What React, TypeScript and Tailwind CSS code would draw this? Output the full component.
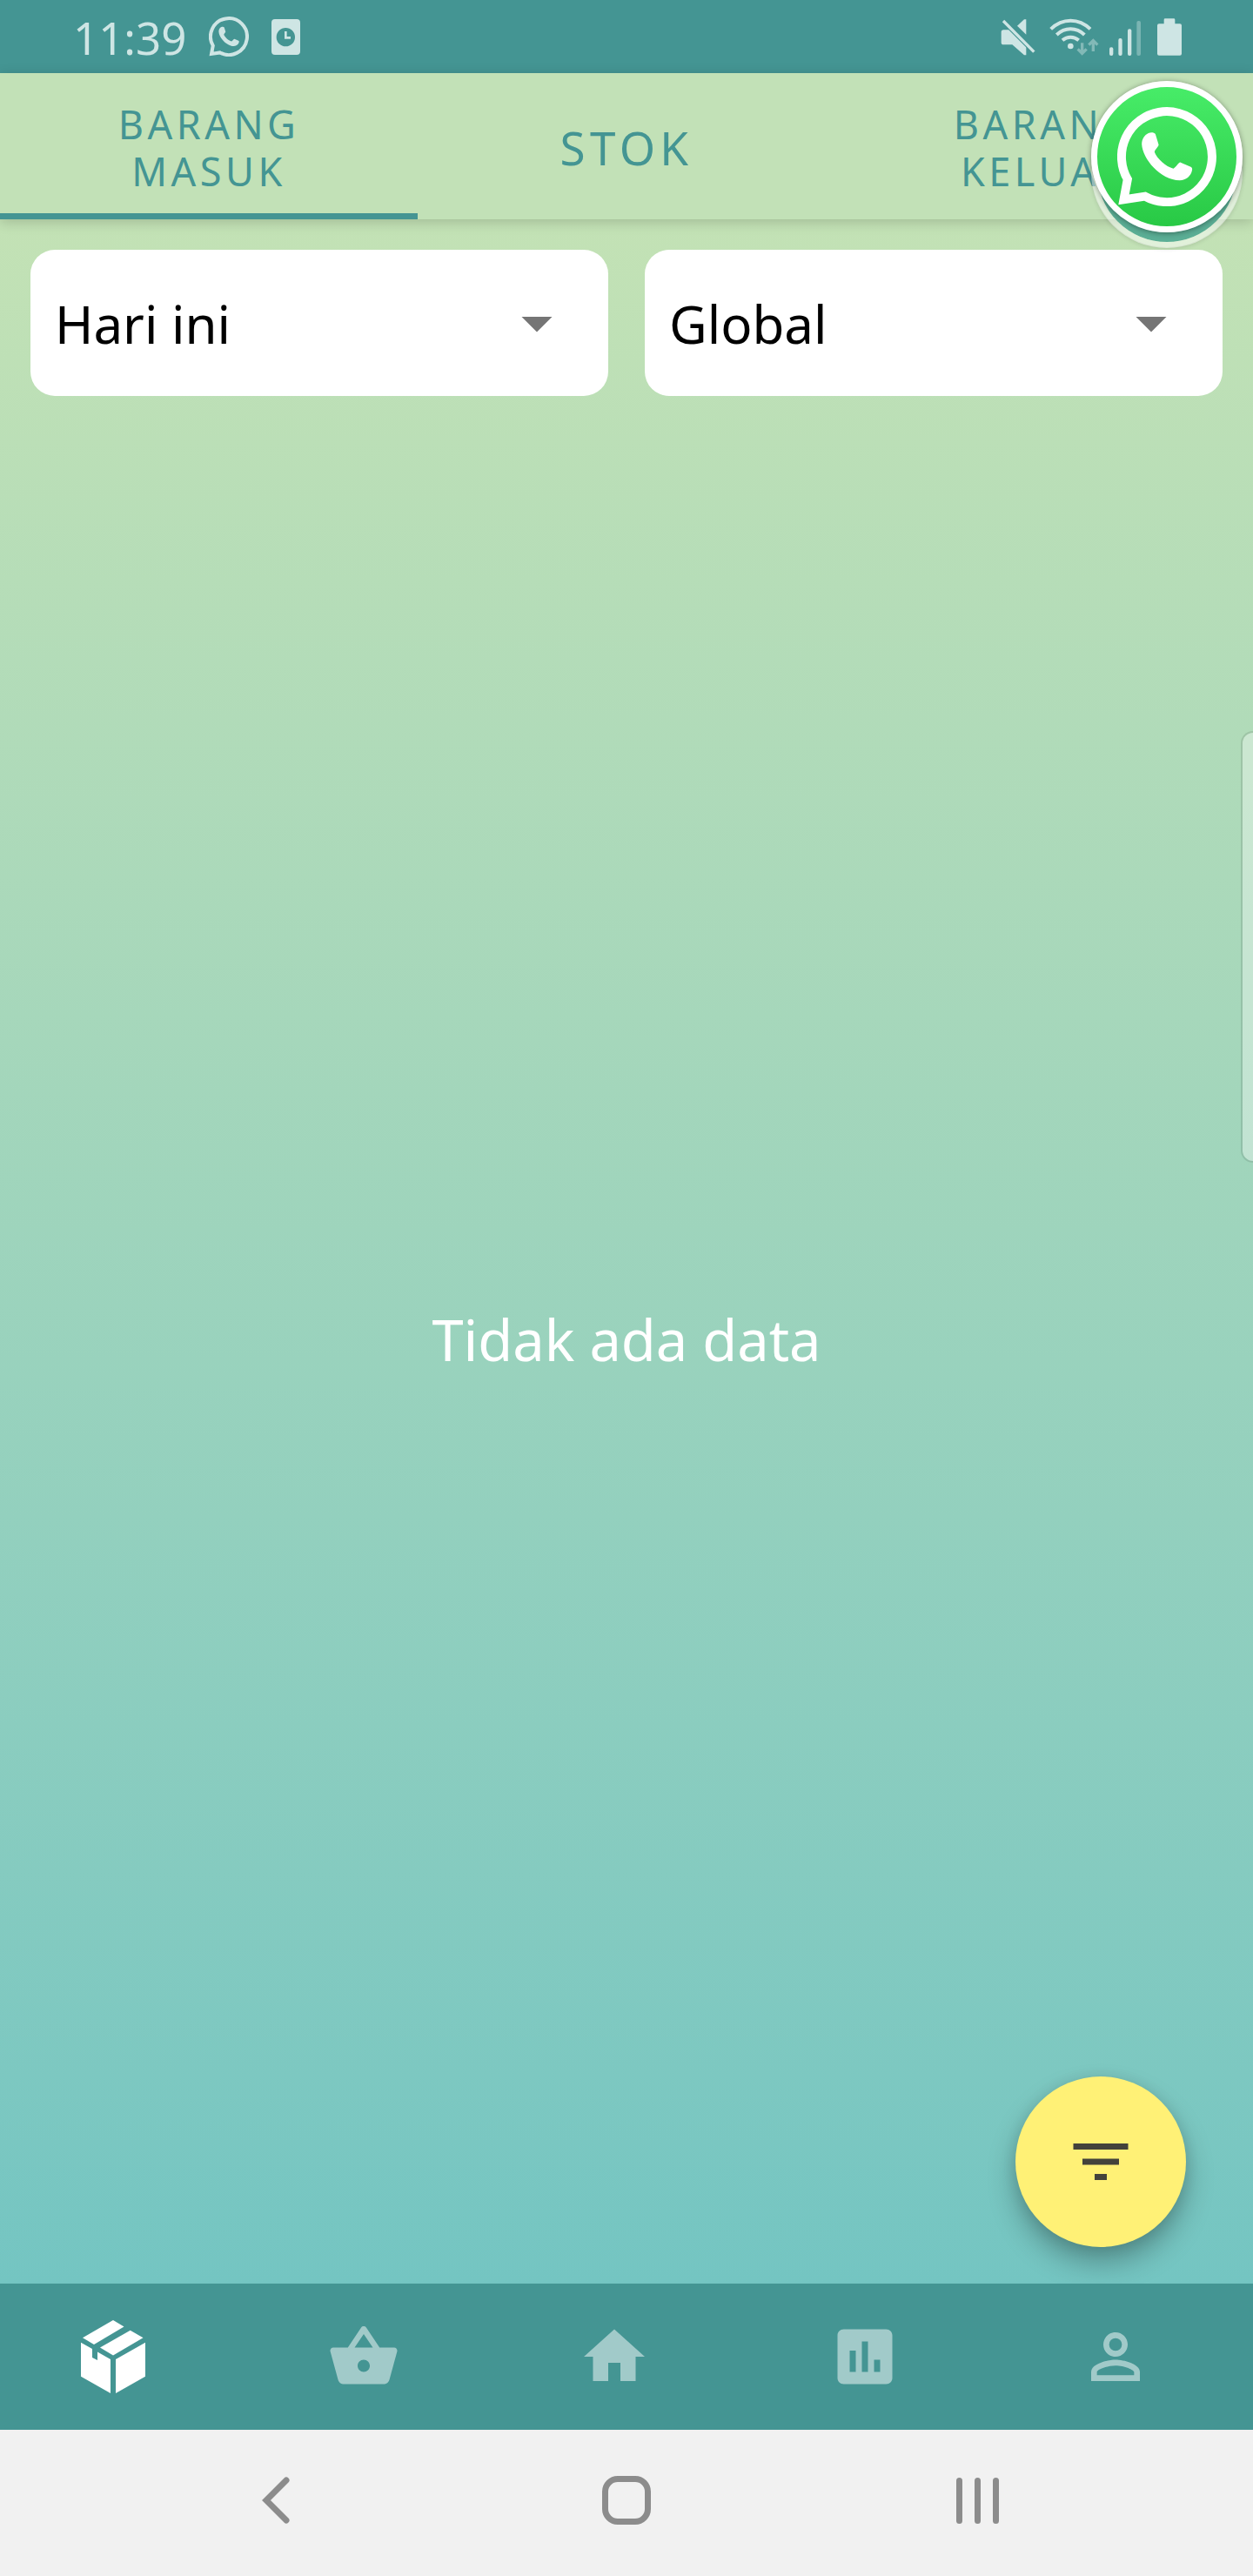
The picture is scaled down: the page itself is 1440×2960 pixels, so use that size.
import { useState } from "react";
import { MdArrowDropDown, MdAssessment, MdFilterList, MdHome, MdPersonOutline, MdShoppingBasket } from "react-icons/md";

function ChatGlyph({ className }: { className: string }) {
  return (
    <svg viewBox="553 367 341 342" className={className} fill="none" aria-hidden="true">
      <path d="M588 616 L575 686 L648 675 A156 156 0 1 0 588 616 Z" stroke="currentColor" strokeWidth="30" />
      <path
        d="M660 457 C668 453 680 454 684 460 L695 496 C697 502 682 513 681 522 C690 545 720 572 746 579 C755 576 764 556 771 558 L806 573 C811 575 812 580 810 587 C806 605 790 619 768 620 C700 618 640 545 637 495 C637 478 646 463 660 457 Z"
        fill="currentColor"
      />
    </svg>
  );
}

function ClockCardIcon() {
  return (
    <svg viewBox="0 0 99 123" className="h-[41px] w-[33px]" aria-hidden="true">
      <path
        fill="currentColor"
        fillRule="evenodd"
        d="M12 0H87Q99 0 99 12V111Q99 123 87 123H12Q0 123 0 111V12Q0 0 12 0Z M49 30A32 32 0 1 0 49 94A32 32 0 1 0 49 30Z"
      />
      <path d="M49 42V64H66" fill="none" stroke="currentColor" strokeWidth="8" />
    </svg>
  );
}

function MuteIcon() {
  return (
    <svg viewBox="152 62 120 129" className="h-[43px] w-10" fill="currentColor" aria-hidden="true">
      <path d="M162 102H181L240 161V189H233L192 153H162Q154 153 154 145V110Q154 102 162 102Z" />
      <path d="M209 88L233 66H240V118Z" />
      <path d="M161 71L267 178" stroke="#449593" strokeWidth="16" />
      <path d="M161 71L267 178" stroke="currentColor" strokeWidth="10" />
    </svg>
  );
}

function WifiIcon() {
  return (
    <svg viewBox="321 62 171 129" className="h-[43px] w-[57px]" fill="none" stroke="currentColor" aria-hidden="true">
      <g strokeWidth="12">
        <path d="M326 99Q356 70 394 70T462 99" />
        <path d="M346 119Q367 99 394 99T442 119" />
        <path d="M366 138Q379 127 394 127T422 138" />
      </g>
      <circle cx="394" cy="158" r="10" fill="currentColor" stroke="none" />
      <g strokeWidth="10" opacity=".45">
        <path d="M434 147V182M419 168L434 183L449 168" />
        <path d="M472 176V140M457 154L472 139L487 154" />
      </g>
    </svg>
  );
}

function SignalIcon() {
  return (
    <svg viewBox="0 0 108 129" className="h-[43px] w-9" fill="currentColor" aria-hidden="true">
      <rect x="0" y="100" width="13" height="29" rx="6" />
      <rect x="31" y="69" width="13" height="60" rx="6" />
      <rect x="63" y="37" width="13" height="92" rx="6" />
      <rect x="94" y="9" width="14" height="120" rx="6" opacity=".4" />
    </svg>
  );
}

function BatteryIcon() {
  return (
    <svg viewBox="0 0 84 129" className="h-[43px] w-7" fill="currentColor" aria-hidden="true">
      <path d="M23 5Q23 1 27 1H57Q61 1 61 5V19H78Q84 19 84 25V122Q84 128 78 128H6Q0 128 0 122V25Q0 19 6 19H23Z" />
    </svg>
  );
}

function PackageIcon() {
  return (
    <svg viewBox="0 0 84 84" className="size-21" fill="currentColor" aria-hidden="true">
      <path d="M42 0L54.5 7.5L20 28L7 20.3Z" />
      <path d="M61.7 11.7L76.5 20.3L42 40.5L27 31.5Z" />
      <path d="M5 25.7L18 33V43L24 46V36.5L39 45V84L5 64.7Z" />
      <path d="M79 25.7V64.7L45 84V45Z" />
    </svg>
  );
}

function Picker({ label, options }: { label: string; options: string[] }) {
  return (
    <div className="relative flex-1">
      <select
        aria-label={label}
        className="h-42 w-full appearance-none rounded-[28px] bg-white pt-0.5 pr-28 pl-7 text-[60px] text-black"
      >
        {options.map((o) => (
          <option key={o}>{o}</option>
        ))}
      </select>
      <MdArrowDropDown className="pointer-events-none absolute inset-y-0 right-10 my-auto size-21 text-[#757575]" />
    </div>
  );
}

const tabs = [
  { label: "BARANG MASUK", text: "text-[45px] leading-[54px]" },
  { label: "STOK", text: "text-[53px] leading-[64px]" },
  { label: "BARANG KELUAR", text: "text-[45px] leading-[54px]" },
];

const navItems = [
  { label: "Barang", icon: <PackageIcon /> },
  { label: "Belanja", icon: <MdShoppingBasket className="size-21" /> },
  { label: "Beranda", icon: <MdHome className="size-21" /> },
  { label: "Laporan", icon: <MdAssessment className="size-21" /> },
  { label: "Profil", icon: <MdPersonOutline className="size-21" /> },
];

export default function App() {
  const [tab, setTab] = useState(0);
  const [nav, setNav] = useState(0);

  return (
    <div className="relative flex min-h-screen flex-col overflow-hidden bg-[#c2e1b7] font-['Noto_Sans',sans-serif]">
      <header className="flex h-21 items-center justify-between bg-[#449593] pr-[82px] pl-21 text-[#cee5e4]">
        <div className="flex items-center">
          <time className="pt-0.5 text-[51px] leading-none">11:39</time>
          <ChatGlyph className="ml-[26px] size-[46px]" />
          <span className="ml-[26px]">
            <ClockCardIcon />
          </span>
        </div>
        <div className="flex items-center">
          <MuteIcon />
          <span className="ml-4">
            <WifiIcon />
          </span>
          <span className="ml-3">
            <SignalIcon />
          </span>
          <span className="ml-[19px]">
            <BatteryIcon />
          </span>
        </div>
      </header>

      <div role="tablist" className="relative z-10 grid h-42 grid-cols-3 bg-[#c2e1b7] shadow-[0_3px_14px_rgba(0,0,0,0.18)]">
        {tabs.map((t, i) => (
          <button
            key={t.label}
            role="tab"
            aria-selected={tab === i}
            onClick={() => setTab(i)}
            className={`relative flex items-center justify-center px-12 pt-1 text-center tracking-widest text-[#449593] ${t.text}`}
          >
            {t.label}
            {tab === i && <span className="absolute inset-x-0 bottom-0 h-[7px] bg-[#449593]" />}
          </button>
        ))}
      </div>

      <main className="relative flex flex-1 flex-col bg-linear-to-b from-[#c3e2b5] to-[#74c5c2]">
        <div className="flex gap-[42px] px-[35px] pt-[35px]">
          <Picker label="Periode" options={["Hari ini", "Minggu ini", "Bulan ini"]} />
          <Picker label="Lokasi" options={["Global"]} />
        </div>
        <p className="flex flex-1 items-center justify-center text-[65px] text-white">Tidak ada data</p>
        <button
          aria-label="Filter"
          className="absolute right-[77px] bottom-[42px] flex size-[196px] items-center justify-center rounded-full bg-[#fff176] text-[#43423b] shadow-[0_18px_32px_rgba(0,0,0,0.28),0_2px_16px_rgba(0,0,0,0.1)]"
        >
          <MdFilterList className="size-21" />
        </button>
      </main>

      <nav className="relative grid h-42 grid-cols-5 bg-[#449593]">
        {navItems.map((n, i) => (
          <button
            key={n.label}
            aria-label={n.label}
            onClick={() => setNav(i)}
            className={`flex items-center justify-center pr-7 ${nav === i ? "text-white" : "text-[#a1cac9]"}`}
          >
            {n.icon}
          </button>
        ))}
      </nav>

      <footer className="grid h-42 grid-cols-3 bg-[#f1f1f1] px-[115px] pb-1.5 text-[#8c8c8c]">
        <button aria-label="Kembali" className="flex items-center justify-center">
          <svg viewBox="0 0 32 54" className="h-[54px] w-8" fill="none" stroke="currentColor" strokeWidth="7" strokeLinecap="round">
            <path d="M28 4L5 27L28 50" />
          </svg>
        </button>
        <button aria-label="Layar utama" className="flex items-center justify-center">
          <span className="size-14 rounded-[18px] border-7 border-current" />
        </button>
        <button aria-label="Aplikasi terbaru" className="flex items-center justify-center gap-3.5">
          <span className="h-[53px] w-[7px] rounded-full bg-current" />
          <span className="h-[53px] w-[7px] rounded-full bg-current" />
          <span className="h-[53px] w-[7px] rounded-full bg-current" />
        </button>
      </footer>

      <div className="absolute top-[840px] right-0 h-[496px] w-3.5 rounded-l-[14px] border-y-2 border-l-2 border-black/10 bg-white/35 bg-clip-padding" />

      <div className="absolute top-[93px] right-3 z-20 size-[174px]">
        <div className="absolute inset-x-0 top-[18px] size-[174px] rounded-full border-7 border-white/50 bg-[#5bae95] bg-clip-padding shadow-[0_1px_5px_rgba(0,0,0,0.12)]" />
        <button
          aria-label="WhatsApp"
          className="relative flex size-full items-center justify-center rounded-full border-7 border-white bg-linear-to-b from-[#47ec68] to-[#28c945] text-white shadow-[0_1px_6px_rgba(0,0,0,0.4)]"
        >
          <ChatGlyph className="size-[114px]" />
        </button>
      </div>
    </div>
  );
}
